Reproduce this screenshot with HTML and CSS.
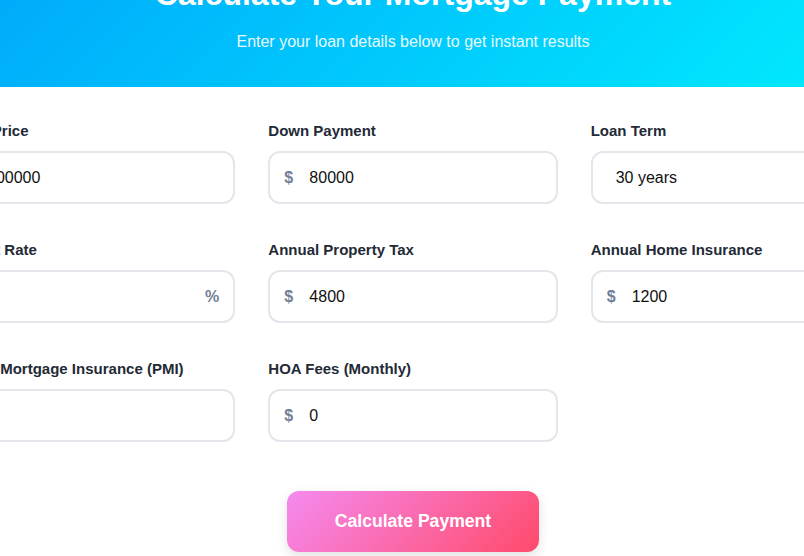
FILE: index.html
```html
<!DOCTYPE html>
<html lang="en">
<head>
  <meta charset="UTF-8">
  <meta name="viewport" content="width=device-width, initial-scale=1.0">
  <title>Mortgage Calculator</title>
  <link rel="stylesheet" href="styles.css">
</head>
<body>
  <div class="calculator">
    <header class="calc-header">
      <h1>Calculate Your Mortgage Payment</h1>
      <p>Enter your loan details below to get instant results</p>
    </header>

    <form class="calc-form" id="calc-form">
      <div class="form-grid">
        <div class="form-group">
          <label for="home-price">Home Price</label>
          <div class="input-wrap">
            <span class="prefix">$</span>
            <input type="text" inputmode="numeric" id="home-price" class="has-prefix" value="400000">
          </div>
        </div>

        <div class="form-group">
          <label for="down-payment">Down Payment</label>
          <div class="input-wrap">
            <span class="prefix">$</span>
            <input type="text" inputmode="numeric" id="down-payment" class="has-prefix" value="80000">
          </div>
        </div>

        <div class="form-group">
          <label for="loan-term">Loan Term</label>
          <div class="input-wrap">
            <select id="loan-term">
              <option value="10">10 years</option>
              <option value="15">15 years</option>
              <option value="20">20 years</option>
              <option value="30" selected>30 years</option>
            </select>
            <span class="select-arrow"></span>
          </div>
        </div>

        <div class="form-group">
          <label for="interest-rate">Interest Rate</label>
          <div class="input-wrap">
            <input type="text" inputmode="decimal" id="interest-rate" class="has-suffix" value="6.5">
            <span class="suffix">%</span>
          </div>
        </div>

        <div class="form-group">
          <label for="property-tax">Annual Property Tax</label>
          <div class="input-wrap">
            <span class="prefix">$</span>
            <input type="text" inputmode="numeric" id="property-tax" class="has-prefix" value="4800">
          </div>
        </div>

        <div class="form-group">
          <label for="home-insurance">Annual Home Insurance</label>
          <div class="input-wrap">
            <span class="prefix">$</span>
            <input type="text" inputmode="numeric" id="home-insurance" class="has-prefix" value="1200">
          </div>
        </div>

        <div class="form-group">
          <label for="pmi">Private Mortgage Insurance (PMI)</label>
          <div class="input-wrap">
            <input type="text" inputmode="decimal" id="pmi" value="0.5">
          </div>
        </div>

        <div class="form-group">
          <label for="hoa">HOA Fees (Monthly)</label>
          <div class="input-wrap">
            <span class="prefix">$</span>
            <input type="text" inputmode="numeric" id="hoa" class="has-prefix" value="0">
          </div>
        </div>
      </div>

      <div class="form-actions">
        <button type="submit" class="calc-btn">Calculate Payment</button>
      </div>
    </form>
  </div>

  <script>
    const form = document.getElementById('calc-form');

    form.addEventListener('submit', (e) => {
      e.preventDefault();
    });
  </script>
</body>
</html>
```

FILE: styles.css
```css
* {
  margin: 0;
  padding: 0;
  box-sizing: border-box;
  font-family: 'Liberation Sans', Arial, sans-serif;
}

html, body {
  overflow: hidden;
}

body {
  background: #ffffff;
}

/* the card is wider than the window, only its middle part shows */
.calculator {
  width: 1014px;
  margin: -64px 0 0 -94px;
  background: white;
}

.calc-header {
  padding: 40px 40px 36px;
  text-align: center;
  color: white;
  background: linear-gradient(135deg, #00a1fa 0%, #00effe 100%);
}

.calc-header h1 {
  font-size: 2rem;
  font-weight: 700;
  margin-bottom: 20px;
}

.calc-header p {
  font-size: 1rem;
  opacity: 0.9;
}

.calc-form {
  padding: 35px 40px 40px;
}

.form-grid {
  display: grid;
  grid-template-columns: repeat(3, 1fr);
  gap: 37px 33px;
}

.form-group label {
  display: block;
  font-size: 15px;
  font-weight: 700;
  color: #232a36;
  margin-bottom: 12px;
}

.input-wrap {
  position: relative;
}

.input-wrap input,
.input-wrap select {
  width: 100%;
  padding: 15px 16px;
  font-size: 1rem;
  line-height: 19px;
  color: #111111;
  background: white;
  border: 2px solid #e3e6ea;
  border-radius: 12px;
  outline: none;
  transition: border-color 0.3s;
}

.input-wrap input:focus,
.input-wrap select:focus {
  border-color: #00b4fc;
}

.input-wrap input.has-prefix {
  padding-left: 39px;
}

.input-wrap input.has-suffix {
  padding-right: 40px;
}

.input-wrap select {
  appearance: none;
  padding-left: 23px;
  cursor: pointer;
}

.prefix, .suffix {
  position: absolute;
  top: 50%;
  transform: translateY(-50%);
  font-size: 1rem;
  font-weight: 700;
  color: #718096;
  pointer-events: none;
}

.prefix {
  left: 16px;
}

.suffix {
  right: 16px;
}

.select-arrow {
  position: absolute;
  top: 50%;
  right: 20px;
  width: 8px;
  height: 8px;
  border-right: 2px solid #718096;
  border-bottom: 2px solid #718096;
  transform: translateY(-70%) rotate(45deg);
  pointer-events: none;
}

.form-actions {
  display: flex;
  justify-content: center;
  margin-top: 49px;
}

.calc-btn {
  padding: 20px 48px;
  font-size: 1.1rem;
  line-height: 21px;
  font-weight: 700;
  color: white;
  background: linear-gradient(135deg, #f58af0 0%, #ff4a6a 100%);
  border: none;
  border-radius: 12px;
  box-shadow: 0 4px 12px rgba(0, 0, 0, 0.12);
  cursor: pointer;
  transition: transform 0.2s;
}

.calc-btn:hover {
  transform: translateY(-2px);
}
```
